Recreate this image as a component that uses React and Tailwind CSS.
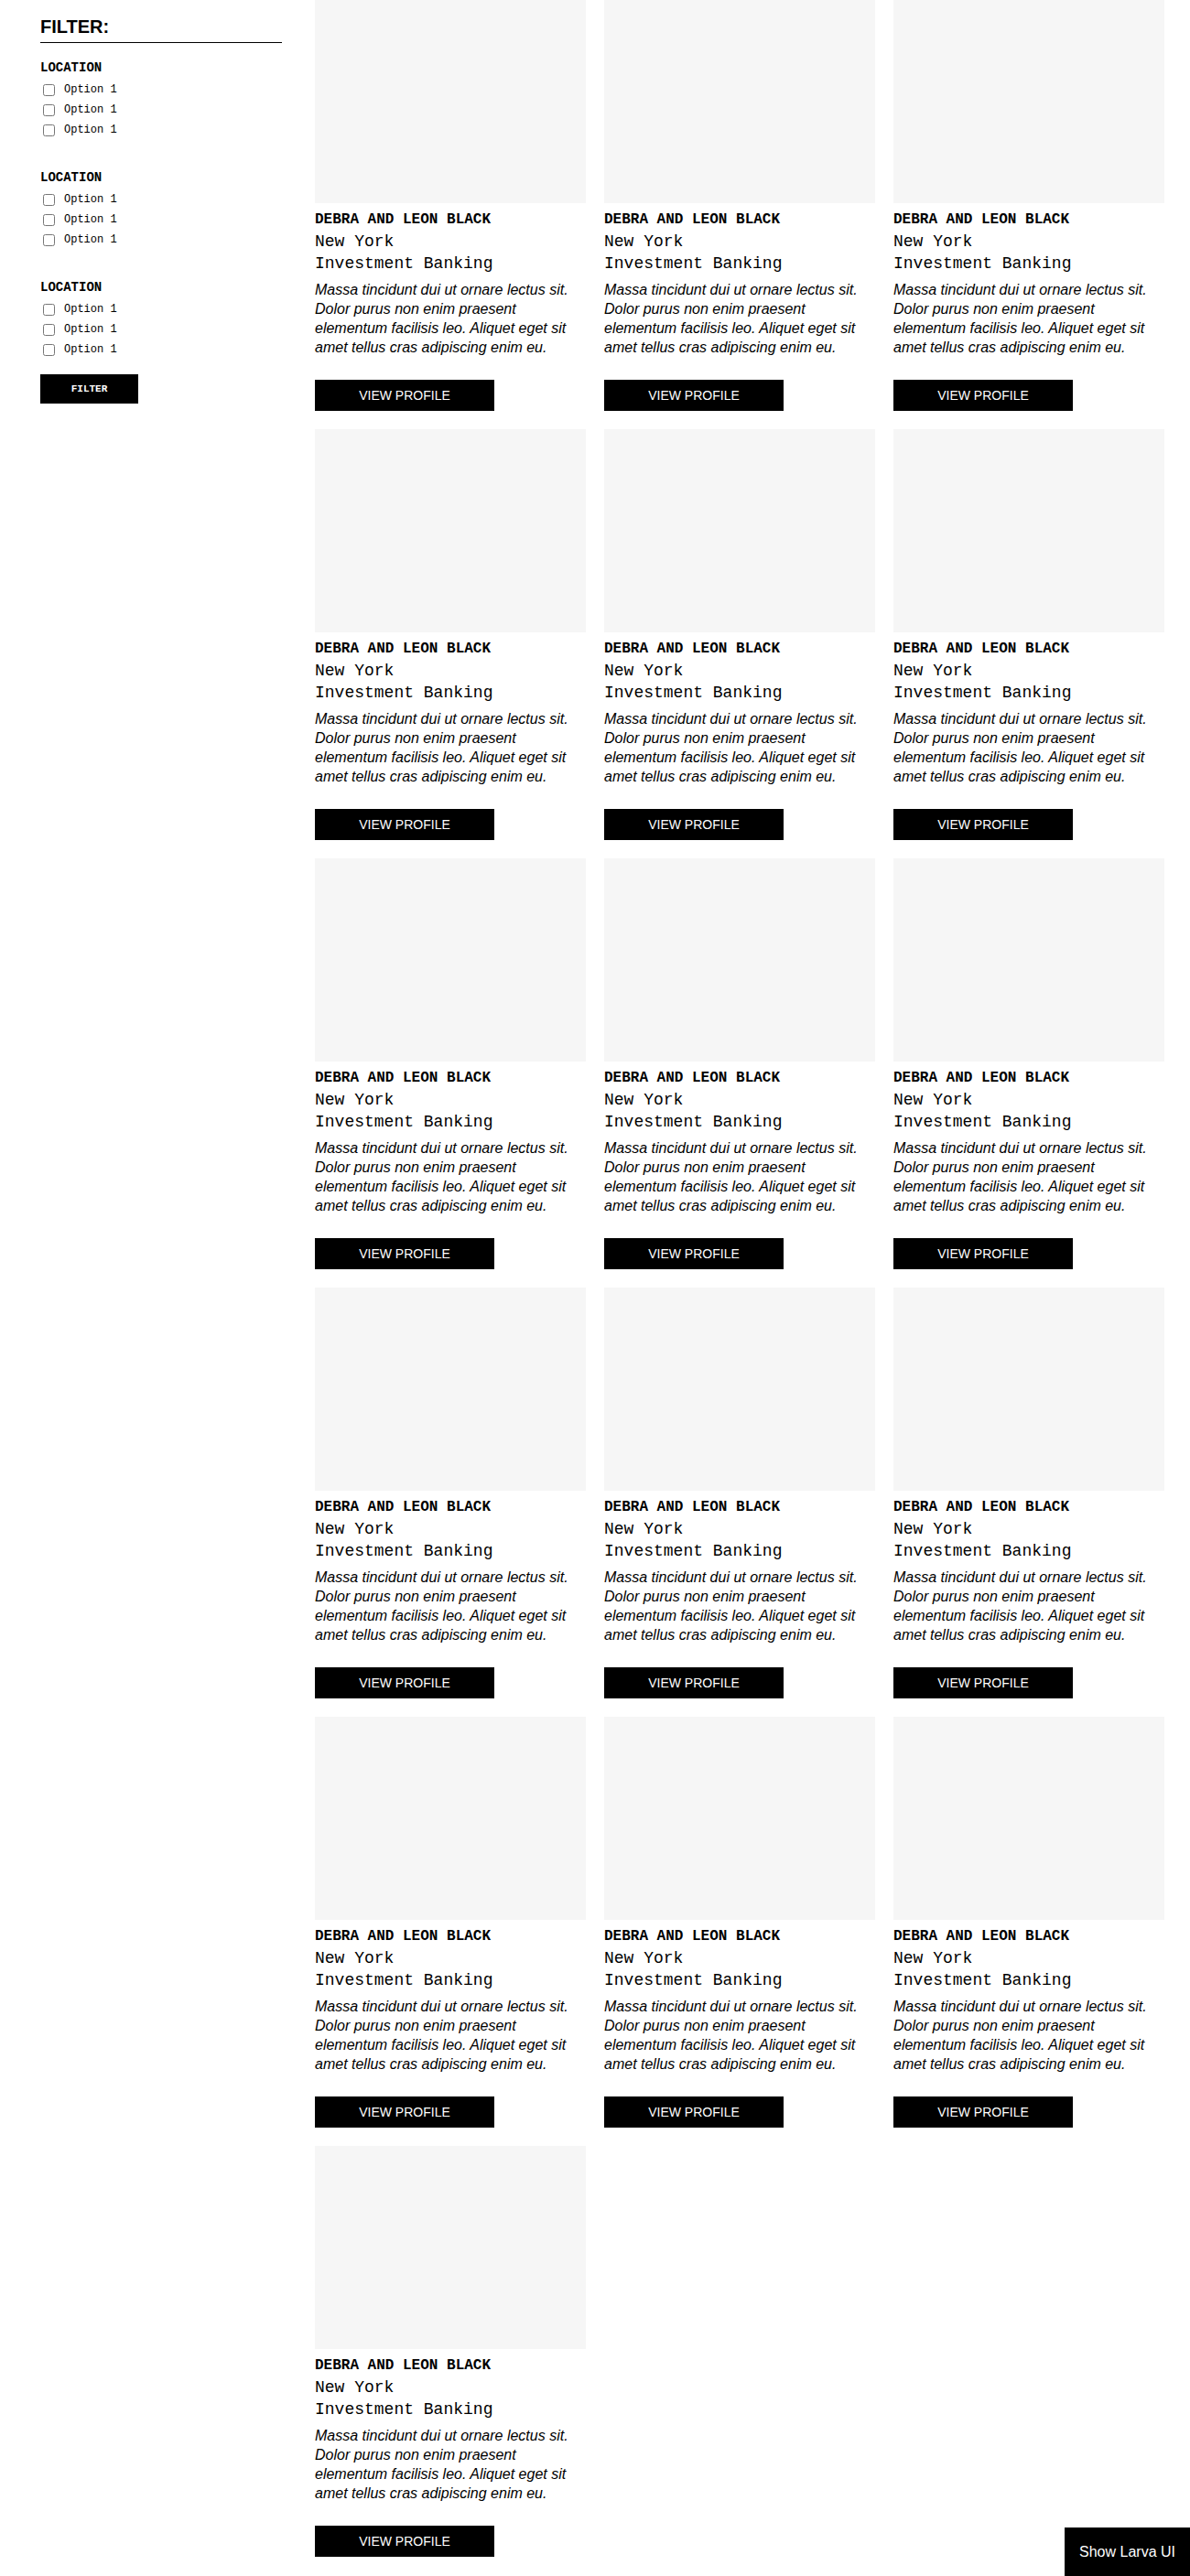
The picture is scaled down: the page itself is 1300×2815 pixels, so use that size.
const mono = "font-['Liberation_Mono','Courier_New',monospace]";
const sans = "font-['Liberation_Sans',Arial,sans-serif]";

const FilterGroup = ({ last }) => (
  <div className={last ? '' : 'mb-[31px]'}>
    <h3 className={`${mono} text-[14px] font-bold leading-[20px] text-black`}>LOCATION</h3>
    <ul className="mt-[3px]">
      {[0, 1, 2].map((i) => (
        <li key={i} className="flex h-[22px] items-center">
          <input
            type="checkbox"
            className="ml-[3px] mr-[10px] h-[13px] w-[13px]"
          />
          <span className={`${mono} text-[12px] text-black`}>Option 1</span>
        </li>
      ))}
    </ul>
  </div>
);

const ProfileCard = () => (
  <div className="flex w-[296px] flex-col">
    <div className="h-[222px] w-full bg-[#f6f6f6]" />
    <p className={`${mono} mt-[6px] text-[16px] font-bold leading-[24px] text-black`}>
      DEBRA AND LEON BLACK
    </p>
    <p className={`${mono} text-[18px] leading-[24px] text-black`}>New York</p>
    <p className={`${mono} text-[18px] leading-[24px] text-black`}>Investment Banking</p>
    <p className={`${sans} mt-[6px] pr-[10px] text-[16px] italic leading-[21px] text-black`}>
      Massa tincidunt dui ut ornare lectus sit. Dolor purus non enim praesent
      elementum facilisis leo. Aliquet eget sit amet tellus cras adipiscing enim eu.
    </p>
    <button
      className={`${sans} mt-[25px] h-[34px] w-[196px] bg-black text-[14px] text-white`}
    >
      VIEW PROFILE
    </button>
  </div>
);

export default function App() {
  const cards = Array.from({ length: 16 });

  return (
    <div className="min-h-[2815px] bg-white">
      <div className="flex items-start pl-[44px]">
        <aside className="w-[264px] shrink-0 pt-[17px]">
          <h2 className={`${sans} border-b border-black pb-[5px] text-[20px] font-bold leading-[24px] text-black`}>
            FILTER:
          </h2>
          <div className="mt-[17px]">
            <FilterGroup />
            <FilterGroup />
            <FilterGroup last />
            <button
              className={`${mono} mt-[16px] h-[32px] w-[107px] bg-black text-[11px] font-bold text-white`}
            >
              FILTER
            </button>
          </div>
        </aside>

        <main className="ml-[36px] grid grid-cols-[repeat(3,296px)] gap-x-[20px] gap-y-[20px] pb-[21px]">
          {cards.map((_, i) => (
            <ProfileCard key={i} />
          ))}
        </main>
      </div>

      <button
        className={`${sans} fixed bottom-0 right-0 h-[53px] w-[137px] bg-black text-[16px] text-white`}
      >
        Show Larva UI
      </button>
    </div>
  );
}
